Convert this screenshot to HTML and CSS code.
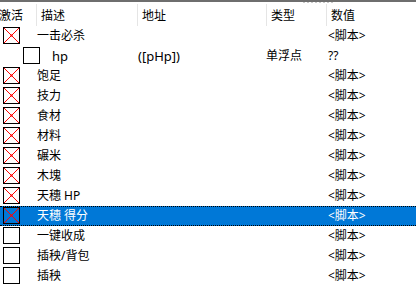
FILE: index.html
```html
<!DOCTYPE html>
<html lang="zh">
  <head>
    <meta charset="UTF-8" />
    <title>作弊表</title>
    <link rel="stylesheet" href="styles.css">
  </head>
  <body>
    <div class="splitter"><span class="grip"></span></div>

    <div class="header">
      <div class="col col-active">激活</div>
      <div class="col">描述</div>
      <div class="col">地址</div>
      <div class="col">类型</div>
      <div class="col">数值</div>
    </div>

    <div class="rows">
      <div class="row">
        <div class="cell-check"><svg class="box" width="17" height="17"><rect x="0.5" y="0.5" width="16" height="16" fill="#fff" stroke="#000"/><path d="M1 1L16 16M16 1L1 16" stroke="#f00"/><rect x="7.5" y="7.5" width="2" height="2" fill="#f00"/></svg></div>
        <div class="desc">一击必杀</div><div></div><div></div><div class="value">&lt;脚本&gt;</div>
      </div>
      <div class="row child">
        <div class="cell-check"></div>
        <div class="desc"><svg class="box" width="17" height="17"><rect x="0.5" y="0.5" width="16" height="16" fill="#fff" stroke="#000"/></svg><span class="child-text">hp</span></div>
        <div class="addr">([pHp])</div><div class="type">单浮点</div><div class="value">??</div>
      </div>
      <div class="row">
        <div class="cell-check"><svg class="box" width="17" height="17"><rect x="0.5" y="0.5" width="16" height="16" fill="#fff" stroke="#000"/><path d="M1 1L16 16M16 1L1 16" stroke="#f00"/><rect x="7.5" y="7.5" width="2" height="2" fill="#f00"/></svg></div>
        <div class="desc">饱足</div><div></div><div></div><div class="value">&lt;脚本&gt;</div>
      </div>
      <div class="row">
        <div class="cell-check"><svg class="box" width="17" height="17"><rect x="0.5" y="0.5" width="16" height="16" fill="#fff" stroke="#000"/><path d="M1 1L16 16M16 1L1 16" stroke="#f00"/><rect x="7.5" y="7.5" width="2" height="2" fill="#f00"/></svg></div>
        <div class="desc">技力</div><div></div><div></div><div class="value">&lt;脚本&gt;</div>
      </div>
      <div class="row">
        <div class="cell-check"><svg class="box" width="17" height="17"><rect x="0.5" y="0.5" width="16" height="16" fill="#fff" stroke="#000"/><path d="M1 1L16 16M16 1L1 16" stroke="#f00"/><rect x="7.5" y="7.5" width="2" height="2" fill="#f00"/></svg></div>
        <div class="desc">食材</div><div></div><div></div><div class="value">&lt;脚本&gt;</div>
      </div>
      <div class="row">
        <div class="cell-check"><svg class="box" width="17" height="17"><rect x="0.5" y="0.5" width="16" height="16" fill="#fff" stroke="#000"/><path d="M1 1L16 16M16 1L1 16" stroke="#f00"/><rect x="7.5" y="7.5" width="2" height="2" fill="#f00"/></svg></div>
        <div class="desc">材料</div><div></div><div></div><div class="value">&lt;脚本&gt;</div>
      </div>
      <div class="row">
        <div class="cell-check"><svg class="box" width="17" height="17"><rect x="0.5" y="0.5" width="16" height="16" fill="#fff" stroke="#000"/><path d="M1 1L16 16M16 1L1 16" stroke="#f00"/><rect x="7.5" y="7.5" width="2" height="2" fill="#f00"/></svg></div>
        <div class="desc">碾米</div><div></div><div></div><div class="value">&lt;脚本&gt;</div>
      </div>
      <div class="row">
        <div class="cell-check"><svg class="box" width="17" height="17"><rect x="0.5" y="0.5" width="16" height="16" fill="#fff" stroke="#000"/><path d="M1 1L16 16M16 1L1 16" stroke="#f00"/><rect x="7.5" y="7.5" width="2" height="2" fill="#f00"/></svg></div>
        <div class="desc">木塊</div><div></div><div></div><div class="value">&lt;脚本&gt;</div>
      </div>
      <div class="row">
        <div class="cell-check"><svg class="box" width="17" height="17"><rect x="0.5" y="0.5" width="16" height="16" fill="#fff" stroke="#000"/><path d="M1 1L16 16M16 1L1 16" stroke="#f00"/><rect x="7.5" y="7.5" width="2" height="2" fill="#f00"/></svg></div>
        <div class="desc">天穗 HP</div><div></div><div></div><div class="value">&lt;脚本&gt;</div>
      </div>
      <div class="row selected">
        <div class="cell-check"><svg class="box" width="17" height="17"><rect x="0.5" y="0.5" width="16" height="16" fill="#0078d7" stroke="#000"/><path d="M1 1L16 16M16 1L1 16" stroke="#f00"/><rect x="7.5" y="7.5" width="2" height="2" fill="#f00"/></svg></div>
        <div class="desc">天穗 得分</div><div></div><div></div><div class="value">&lt;脚本&gt;</div>
      </div>
      <div class="row">
        <div class="cell-check"><svg class="box" width="17" height="17"><rect x="0.5" y="0.5" width="16" height="16" fill="#fff" stroke="#000"/></svg></div>
        <div class="desc">一键收成</div><div></div><div></div><div class="value">&lt;脚本&gt;</div>
      </div>
      <div class="row">
        <div class="cell-check"><svg class="box" width="17" height="17"><rect x="0.5" y="0.5" width="16" height="16" fill="#fff" stroke="#000"/></svg></div>
        <div class="desc">插秧/背包</div><div></div><div></div><div class="value">&lt;脚本&gt;</div>
      </div>
      <div class="row">
        <div class="cell-check"><svg class="box" width="17" height="17"><rect x="0.5" y="0.5" width="16" height="16" fill="#fff" stroke="#000"/></svg></div>
        <div class="desc">插秧</div><div></div><div></div><div class="value">&lt;脚本&gt;</div>
      </div>
    </div>
  </body>
</html>
```

FILE: styles.css
```css
/* cheat table list view */
body {
  margin: 0;
  width: 416px;
  height: 306px;
  overflow: hidden;
  background-color: #fff;
  font-family: "Noto Sans", "Noto Sans CJK SC", sans-serif;
  font-size: 12px;
  color: #000;
}

.splitter {
  height: 2px;
  background-color: #6e6e6e;
  position: relative;
}

.grip {
  position: absolute;
  left: 303px;
  top: 2px;
  width: 32px;
  height: 1px;
  background-image: linear-gradient(to right, #c8c8c8 50%, transparent 50%);
  background-size: 4px 1px;
}

.header {
  display: grid;
  grid-template-columns: 36px 101px 129px 60px 1fr;
  height: 24px;
  align-items: stretch;
}

.header .col {
  display: flex;
  align-items: center;
  padding-left: 4px;
  border-left: 1px solid #e5e5e5;
  margin-top: 2px;
  padding-bottom: 1px;
}

.header .col-active {
  border-left: none;
  padding-left: 0;
  margin-left: -1px;
}

.row {
  display: grid;
  grid-template-columns: 37px 100px 129px 61px 1fr;
  height: 20px;
  line-height: 20px;
  white-space: nowrap;
}

.cell-check {
  display: flex;
  align-items: flex-start;
  padding: 1px 0 0 3px;
}

.box {
  display: block;
}

.child .desc {
  display: flex;
  align-items: flex-start;
  padding-top: 1px;
  margin-left: -14px;
  line-height: 18px;
}

.child-text {
  margin-left: 12px;
  font-size: 13px;
}

.addr {
  padding-left: 1px;
  font-size: 13px;
}

.value {
  padding-left: 1px;
}

.selected {
  background-color: #0078d7;
  color: #fff;
  border-top: 1px dotted #000;
  border-bottom: 1px dotted #000;
  height: 18px;
  line-height: 18px;
}

.selected .cell-check {
  padding-top: 0;
}
```
